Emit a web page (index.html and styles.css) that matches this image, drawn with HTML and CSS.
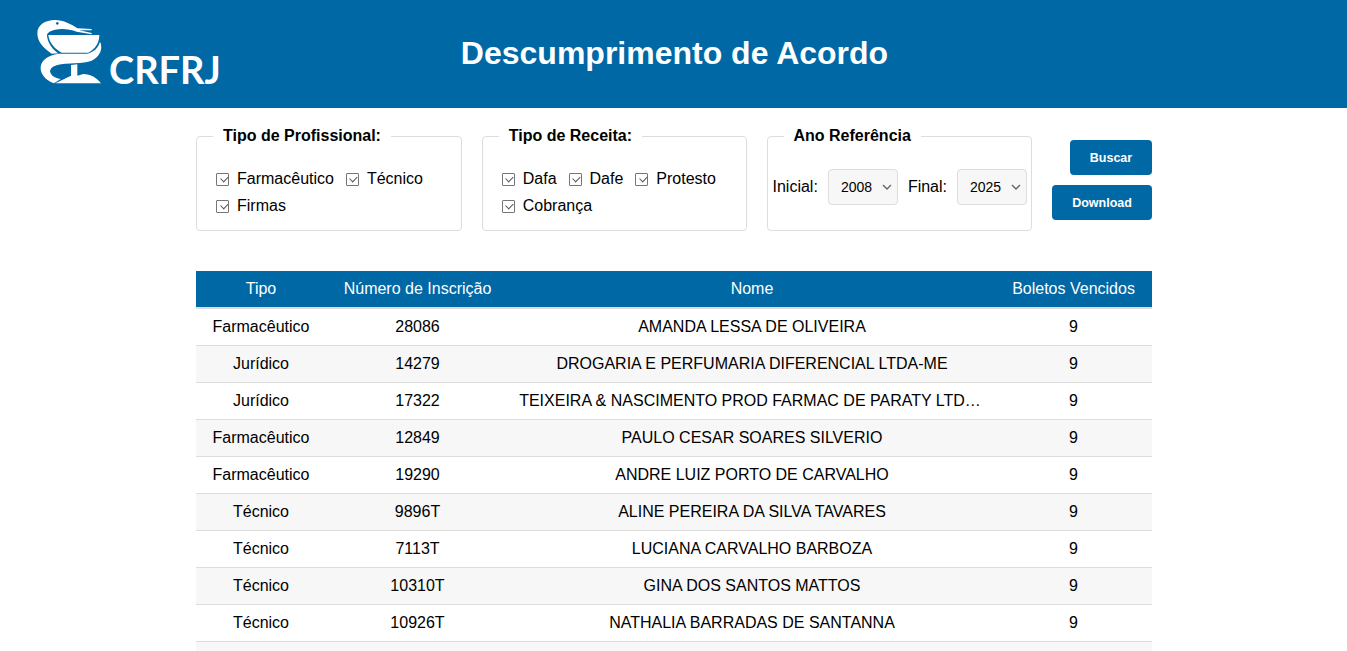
FILE: index.html
```html
<!DOCTYPE html>
<html lang="pt-BR">
<head>
<meta charset="utf-8">
<title>Descumprimento de Acordo</title>
<link rel="stylesheet" href="styles.css">
</head>
<body>
<div class="app">
<header class="header">
  <div class="logo">
    <svg class="logo-icon" viewBox="39 36 213 207" width="71" height="69" aria-hidden="true">
      <path fill="#fff" fill-rule="evenodd" d="M52 85C52 60 75 45 105 45C130 45 155 58 172 70L215 72L215 76L178 76L215 84L215 88L170 80C150 72 125 70 105 74C92 77 81 82 81 92C83 115 100 135 115 145L95 146C70 130 52 110 52 85ZM112 51a4 4 0 1 0 .01 0Z"/>
      <path fill="#fff" d="M85 90L238 90C238 115 225 132 205 143L125 143C105 132 88 115 85 90Z"/>
      <path fill="#fff" d="M240 110C250 130 240 155 215 167C190 177 140 172 112 180C94 185 87 195 92 205C97 215 107 220 122 222L102 235C75 225 60 205 62 185C65 165 85 150 115 146L200 146C220 143 235 128 240 110Z"/>
      <path fill="#fff" d="M106 235L243 235C230 218 212 207 190 207L172 212L172 178L153 180L153 212Z"/>
    </svg>
    <span class="logo-text">CRFRJ</span>
  </div>
  <h1 class="title">Descumprimento de Acordo</h1>
</header>
<main class="main">
  <section class="filters">
    <fieldset class="box">
      <legend>Tipo de Profissional:</legend>
      <div class="checks">
        <label class="check"><span class="tick"></span>Farmacêutico</label>
        <label class="check"><span class="tick"></span>Técnico</label>
        <label class="check"><span class="tick"></span>Firmas</label>
      </div>
    </fieldset>
    <fieldset class="box">
      <legend>Tipo de Receita:</legend>
      <div class="checks">
        <label class="check"><span class="tick"></span>Dafa</label>
        <label class="check"><span class="tick"></span>Dafe</label>
        <label class="check"><span class="tick"></span>Protesto</label>
        <label class="check"><span class="tick"></span>Cobrança</label>
      </div>
    </fieldset>
    <fieldset class="box">
      <legend>Ano Referência</legend>
      <div class="years">
        <span>Inicial:</span>
        <span class="select">2008<svg viewBox="0 0 10 6" width="10" height="6"><path d="M1 1l4 4 4-4" fill="none" stroke="#666" stroke-width="1.400"/></svg></span>
        <span>Final:</span>
        <span class="select">2025<svg viewBox="0 0 10 6" width="10" height="6"><path d="M1 1l4 4 4-4" fill="none" stroke="#666" stroke-width="1.400"/></svg></span>
      </div>
    </fieldset>
    <div class="actions">
      <button class="btn btn-search">Buscar</button>
      <button class="btn btn-download">Download</button>
    </div>
  </section>
  <table class="table">
    <colgroup><col class="c1"><col class="c2"><col class="c3"><col class="c4"></colgroup>
    <thead><tr><th>Tipo</th><th>Número de Inscrição</th><th>Nome</th><th>Boletos Vencidos</th></tr></thead>
    <tbody>
      <tr><td>Farmacêutico</td><td>28086</td><td>AMANDA LESSA DE OLIVEIRA</td><td>9</td></tr>
      <tr><td>Jurídico</td><td>14279</td><td>DROGARIA E PERFUMARIA DIFERENCIAL LTDA-ME</td><td>9</td></tr>
      <tr><td>Jurídico</td><td>17322</td><td class="cut">TEIXEIRA &amp; NASCIMENTO PROD FARMAC DE PARATY LTD…</td><td>9</td></tr>
      <tr><td>Farmacêutico</td><td>12849</td><td>PAULO CESAR SOARES SILVERIO</td><td>9</td></tr>
      <tr><td>Farmacêutico</td><td>19290</td><td>ANDRE LUIZ PORTO DE CARVALHO</td><td>9</td></tr>
      <tr><td>Técnico</td><td>9896T</td><td>ALINE PEREIRA DA SILVA TAVARES</td><td>9</td></tr>
      <tr><td>Técnico</td><td>7113T</td><td>LUCIANA CARVALHO BARBOZA</td><td>9</td></tr>
      <tr><td>Técnico</td><td>10310T</td><td>GINA DOS SANTOS MATTOS</td><td>9</td></tr>
      <tr><td>Técnico</td><td>10926T</td><td>NATHALIA BARRADAS DE SANTANNA</td><td>9</td></tr>
      <tr><td>&nbsp;</td><td></td><td></td><td></td></tr>
    </tbody>
  </table>
</main>
</div>
</body>
</html>
```
FILE: styles.css
```css
* { box-sizing: border-box; }
html, body { margin: 0; padding: 0; }
body { font-family: "Liberation Sans", Arial, sans-serif; color: #000; background: #fff; }
.app { height: 651px; overflow: hidden; }
.header { height: 108px; background: #0068a5; position: relative; }
.logo { position: absolute; left: 33px; top: 17px; display: flex; align-items: flex-end; }
.logo-icon { display: block; }
.logo-text { font-family: "Lato", sans-serif; font-weight: 700; font-size: 38px; line-height: 37px; color: #fff; margin-left: 5px; margin-bottom: -2px; }
.title { margin: 0; text-align: center; font-size: 32px; font-weight: 700; color: #fff; line-height: 37px; padding: 35px 0 0 2px; }
.main { width: 956px; margin-left: 196px; }
.filters { display: flex; gap: 20px; padding-top: 19px; height: 163px; }
.box { width: 266px; height: 104px; margin: 0; padding: 0; border: 1px solid #ddd; border-radius: 4px; }
.box + .box { width: 265px; }
.box legend { font-size: 16px; font-weight: 700; padding: 0 10px; margin-left: 16px; line-height: 18px; }
.checks { display: flex; flex-wrap: wrap; column-gap: 12px; row-gap: 9px; font-size: 16px; line-height: 18px; padding: 25px 5px 0 19px; }
.check { display: flex; align-items: center; gap: 8px; }
.tick { width: 13px; height: 13px; border: 1px solid #767676; border-radius: 1px; background: #fff; position: relative; }
.tick::after { content: ""; position: absolute; left: 2.500px; top: 1px; width: 6px; height: 3.500px; border-left: 1.300px solid #555; border-bottom: 1.300px solid #555; transform: rotate(-45deg) translate(0, 1px); }
.years { display: flex; align-items: center; gap: 10px; font-size: 16px; padding: 24px 4px 0 5px; }
.select { width: 70px; height: 36px; background: #f7f7f7; border: 1px solid #ddd; border-radius: 4px; font-size: 14px; display: flex; align-items: center; justify-content: space-between; padding: 0 5px 0 12px; }
.actions { display: flex; flex-direction: column; align-items: flex-end; gap: 10px; padding-top: 13px; flex: 1; }
.btn { background: #0068a5; color: #fff; border: 0; border-radius: 4px; height: 35px; font-family: "Liberation Sans", Arial, sans-serif; font-size: 12.500px; font-weight: 700; }
.btn-search { width: 82px; }
.btn-download { width: 100px; }
.table { width: 956px; table-layout: fixed; border-collapse: collapse; font-size: 16px; }
.c1 { width: 130px; } .c2 { width: 183px; } .c3 { width: 486px; } .c4 { width: 157px; }
.table th { background: #0068a5; color: #fff; font-weight: 400; height: 37px; padding: 0; text-align: center; }
.table thead tr { border-bottom: 2px solid #ddd; }
.table td { height: 37px; padding: 0; text-align: center; border-bottom: 1px solid #ddd; }
.table td.cut { padding-right: 4px; }
.table tbody tr:nth-child(even) { background: #f7f7f7; }
```
